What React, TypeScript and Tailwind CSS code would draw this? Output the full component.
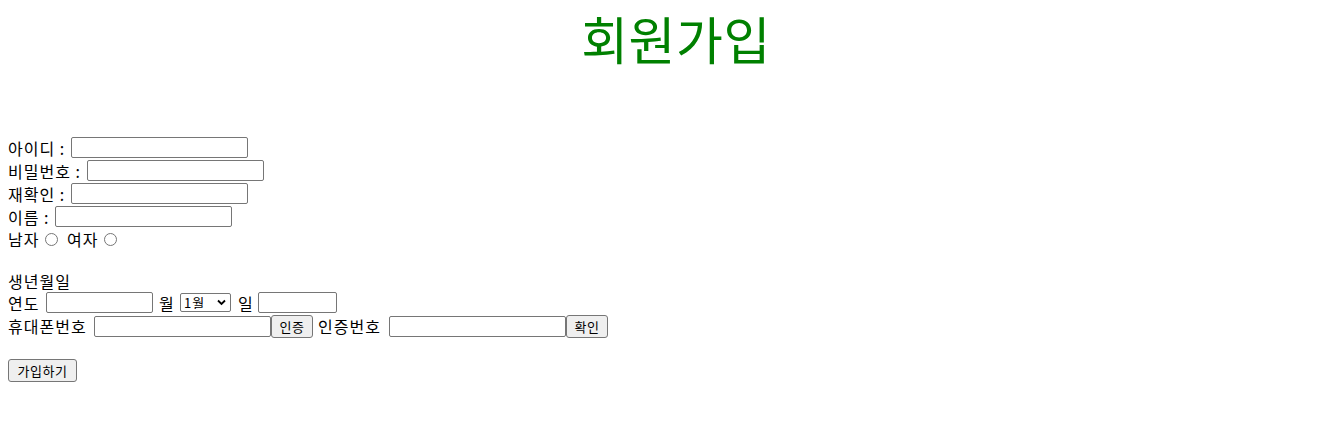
import React from "react";

const inputCls =
  "h-[21px] border border-[#767676] rounded-[2px] bg-white px-[2px] text-[13px] outline-none";
const btnCls =
  "h-[23px] border border-[#767676] rounded-[3px] bg-[#efefef] px-[6px] text-[13px] leading-none text-black tracking-[0.5px]";
const radioCls =
  "appearance-none w-[13px] h-[13px] rounded-full border border-[#767676] bg-white ml-[5px] mr-[3px] mt-[2px]";

export default function App() {
  return (
    <div
      className="w-[1343px] h-[429px] bg-white text-black text-[16px]"
      style={{ fontFamily: '"Noto Sans CJK KR", "Noto Sans", sans-serif' }}
    >
      <div className="h-[136px] px-[8px]">
        <h1 className="text-center text-[#008000] text-[51px] leading-none font-normal pt-[13px] pl-[9px] tracking-[0.5px]">
          회원가입
        </h1>
      </div>
      <form className="px-[8px] flex flex-col tracking-[1px]" onSubmit={(e) => e.preventDefault()}>
        <div className="h-[23px] flex items-center">
          <span className="w-[63px] whitespace-nowrap">아이디 :</span>
          <input type="text" className={`${inputCls} w-[177px]`} />
        </div>
        <div className="h-[23px] flex items-center">
          <span className="w-[79px] whitespace-nowrap">비밀번호 :</span>
          <input type="password" className={`${inputCls} w-[177px]`} />
        </div>
        <div className="h-[23px] flex items-center">
          <span className="w-[63px] whitespace-nowrap">재확인 :</span>
          <input type="password" className={`${inputCls} w-[177px]`} />
        </div>
        <div className="h-[23px] flex items-center">
          <span className="w-[47px] whitespace-nowrap">이름 :</span>
          <input type="text" className={`${inputCls} w-[177px]`} />
        </div>
        <div className="h-[21px] flex items-center">
          <span className="w-[32px] whitespace-nowrap">남자</span>
          <input type="radio" name="gender" className={radioCls} />
          <span className="w-[38px] whitespace-nowrap pl-[6px]">여자</span>
          <input type="radio" name="gender" className={radioCls} />
        </div>
        <div className="h-[21px]" />
        <div className="h-[21px] flex items-center">생년월일</div>
        <div className="h-[23px] flex items-center">
          <span className="w-[38px] whitespace-nowrap">연도</span>
          <input type="text" className={`${inputCls} w-[107px]`} />
          <span className="w-[27px] whitespace-nowrap pl-[6px]">월</span>
          <span className="relative inline-flex">
            <select className="appearance-none h-[19px] w-[51px] border border-[#767676] rounded-[2px] bg-white pl-[3px] text-[13px] leading-none outline-none">
              {Array.from({ length: 12 }, (_, i) => (
                <option key={i}>{i + 1}월</option>
              ))}
            </select>
            <svg
              className="absolute right-[5px] top-[6px] pointer-events-none"
              width="9"
              height="7"
              viewBox="0 0 9 7"
            >
              <path d="M1 1.5 L4.5 5 L8 1.5" stroke="#000" strokeWidth="1.8" fill="none" />
            </svg>
          </span>
          <span className="w-[27px] whitespace-nowrap pl-[7px]">일</span>
          <input type="text" className={`${inputCls} w-[79px]`} />
        </div>
        <div className="h-[24px] flex items-center">
          <span className="w-[86px] whitespace-nowrap">휴대폰번호</span>
          <input type="text" className={`${inputCls} w-[177px]`} />
          <button type="button" className={`${btnCls} w-[42px]`}>
            인증
          </button>
          <span className="w-[76px] whitespace-nowrap pl-[5px]">인증번호</span>
          <input type="text" className={`${inputCls} w-[177px]`} />
          <button type="button" className={`${btnCls} w-[42px]`}>
            확인
          </button>
        </div>
        <div className="h-[20px]" />
        <div className="h-[24px] flex items-center">
          <button type="submit" className={`${btnCls} w-[69px]`}>
            가입하기
          </button>
        </div>
      </form>
    </div>
  );
}
